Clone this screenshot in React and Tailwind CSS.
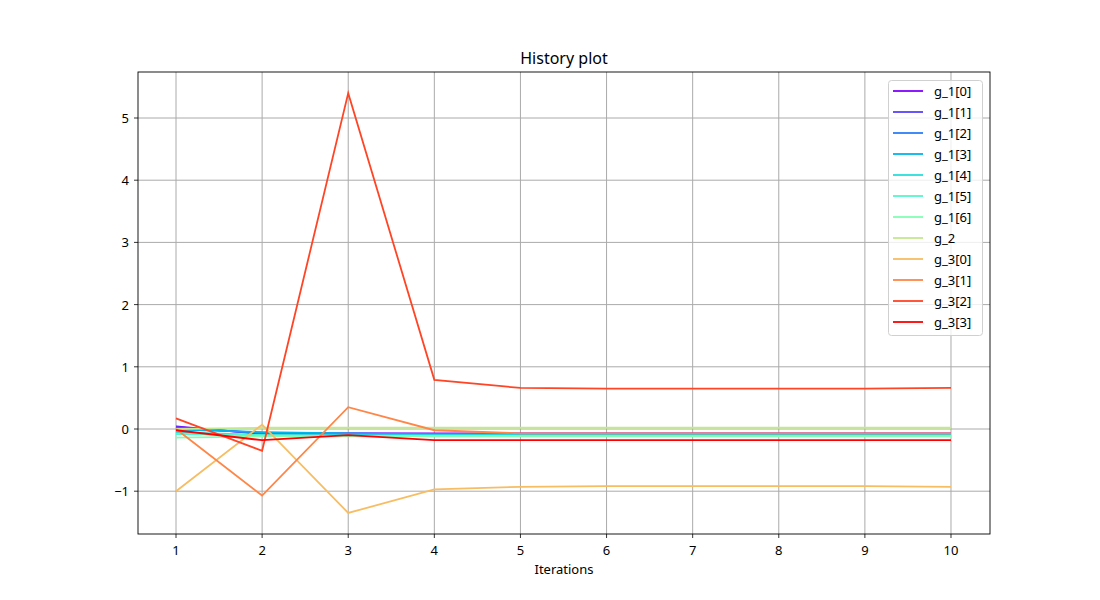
export default function App() {
  const X = (i) => 176 + (i - 1) * 86.11;
  const Y = (v) => 429 - v * 62.2;
  const series = [
    ["g_1[0]", "#8000ff", [0.04, -0.08, -0.07, -0.07, -0.07, -0.07, -0.07, -0.07, -0.07, -0.07]],
    ["g_1[1]", "#5641fd", [0.03, -0.07, -0.07, -0.08, -0.08, -0.08, -0.08, -0.08, -0.08, -0.08]],
    ["g_1[2]", "#2c7ef7", [0.01, -0.06, -0.08, -0.08, -0.08, -0.08, -0.08, -0.08, -0.08, -0.08]],
    ["g_1[3]", "#00b5eb", [-0.01, -0.05, -0.07, -0.09, -0.09, -0.09, -0.09, -0.09, -0.09, -0.09]],
    ["g_1[4]", "#2adddd", [-0.05, -0.1, -0.1, -0.1, -0.1, -0.1, -0.1, -0.1, -0.1, -0.1]],
    ["g_1[5]", "#54f6cb", [-0.08, -0.1, -0.11, -0.11, -0.11, -0.11, -0.11, -0.11, -0.11, -0.11]],
    ["g_1[6]", "#80ffb4", [-0.14, -0.12, -0.12, -0.12, -0.12, -0.12, -0.12, -0.12, -0.12, -0.12]],
    ["g_2", "#c4e88e", [0.0, 0.02, 0.02, 0.02, 0.02, 0.02, 0.02, 0.02, 0.02, 0.02]],
    ["g_3[0]", "#f7bd63", [-1.0, 0.07, -1.35, -0.97, -0.93, -0.92, -0.92, -0.92, -0.92, -0.93]],
    ["g_3[1]", "#ff8647", [0.0, -1.07, 0.35, -0.02, -0.07, -0.07, -0.07, -0.07, -0.07, -0.07]],
    ["g_3[2]", "#ff4525", [0.17, -0.35, 5.4, 0.79, 0.66, 0.65, 0.65, 0.65, 0.65, 0.66]],
    ["g_3[3]", "#ff0000", [-0.02, -0.18, -0.1, -0.18, -0.18, -0.18, -0.18, -0.18, -0.18, -0.18]],
  ];
  const yt = [5, 4, 3, 2, 1, 0, -1];
  const xs = [1, 2, 3, 4, 5, 6, 7, 8, 9, 10];
  return (
    <div className="w-[1100px] h-[600px] bg-white font-['DejaVu_Sans',sans-serif]">
      <svg width="1100" height="600">
        <text x="564" y="64" fontSize="16" textAnchor="middle" fill="#000">History plot</text>
        {xs.map((i) => (
          <g key={i}>
            <line x1={X(i)} x2={X(i)} y1="72" y2="534" stroke="#aaaaaa" strokeWidth="1" />
            <line x1={X(i)} x2={X(i)} y1="534" y2="538" stroke="#000" strokeWidth="0.8" />
            <text x={X(i)} y="555" fontSize="13" textAnchor="middle">{i}</text>
          </g>
        ))}
        {yt.map((v) => (
          <g key={v}>
            <line x1="138" x2="990" y1={Y(v)} y2={Y(v)} stroke="#aaaaaa" strokeWidth="1" />
            <line x1="134" x2="138" y1={Y(v)} y2={Y(v)} stroke="#000" strokeWidth="0.8" />
            <text x="129" y={Y(v) + 5} fontSize="13" textAnchor="end">{v < 0 ? "−1" : v}</text>
          </g>
        ))}
        <text x="564" y="574" fontSize="13" textAnchor="middle">Iterations</text>
        {series.map(([n, c, d]) => (
          <polyline key={n} fill="none" stroke={c} strokeWidth="1.8" points={d.map((v, k) => `${X(k + 1)},${Y(v)}`).join(" ")} />
        ))}
        <rect x="138" y="72" width="852" height="462" fill="none" stroke="#000" strokeWidth="0.9" />
        <rect x="888.5" y="80.5" width="94" height="255" rx="3" fill="#fff" fillOpacity="0.8" stroke="#d0d0d0" />
        {series.map(([n, c], k) => (
          <g key={n}>
            <line x1="893" x2="923" y1={91 + k * 21} y2={91 + k * 21} stroke={c} strokeWidth="1.8" />
            <text x="934" y={96 + k * 21} fontSize="13">{n}</text>
          </g>
        ))}
      </svg>
    </div>
  );
}
